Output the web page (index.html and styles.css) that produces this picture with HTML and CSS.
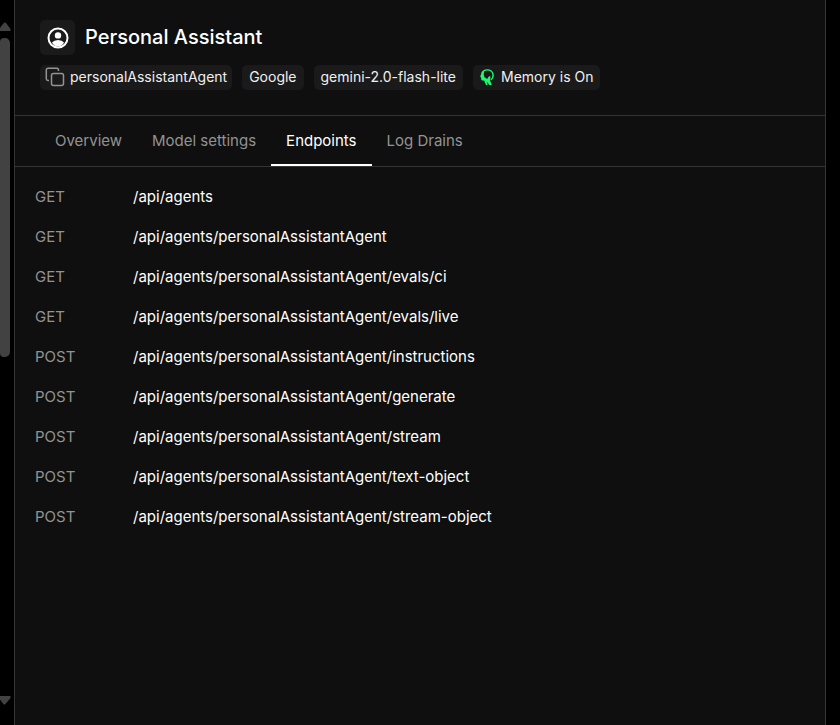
FILE: index.html
```html
<!DOCTYPE html>
<html lang="en">
<head>
<meta charset="utf-8">
<title>Personal Assistant</title>
<link rel="stylesheet" href="styles.css">
</head>
<body>
<div class="app">
  <div class="scrollbar" aria-hidden="true">
    <svg class="arrow" viewBox="0 0 12 9"><path d="M-1 9v-2L4 .8Q5 0 6 1L10.500 7v2z"/></svg>
    <div class="track"><div class="thumb"></div></div>
    <svg class="arrow" viewBox="0 0 12 9"><path d="M-1 0v2L3.500 8.200Q4.500 9 5.500 8L10.500 2V0z"/></svg>
  </div>
  <main class="panel">
    <header class="header">
      <div class="heading">
        <span class="avatar">
          <svg viewBox="0 0 22 22" width="22" height="22"><circle cx="11" cy="11" r="9.500" fill="none" stroke="#fff" stroke-width="2"/><circle cx="11" cy="8.400" r="3.200" fill="#fff"/><path d="M5 15.500Q7 13 11 13T17 15.500Q15 19.500 11 19.500T5 15.500z" fill="#fff"/></svg>
        </span>
        <h1>Personal Assistant</h1>
      </div>
      <div class="badges">
        <button class="badge copy" type="button">
          <svg viewBox="0 0 20 20" width="20" height="20" fill="none" stroke="#939393" stroke-width="1.500"><rect x="6.500" y="6.500" width="12" height="12" rx="2"/><path d="M4 13.500H3a1.700 1.700 0 0 1-1.700-1.700V3A1.700 1.700 0 0 1 3 1.300h8.800A1.700 1.700 0 0 1 13.500 3v1"/></svg>
          personalAssistantAgent
        </button>
        <span class="badge">Google</span>
        <span class="badge">gemini-2.0-flash-lite</span>
        <span class="badge memory">
          <svg viewBox="0 0 14 16" width="14" height="16" fill="#1bfb6f"><path d="M2 4.500C3.500-.2 11-.4 12.700 4.200 13.800 7.400 12.600 9.600 10.800 10.800" fill="none" stroke="#1bfb6f" stroke-width="1.400"/><path d="M3.400 1.800Q1.300 3 1 5.500L.2 7.600 1 8.400 1.300 10.800q.2.700 1 .7h1.800L6 16h1.600L6.700 12.600 9.300 16h2.500L10 11.200 10.500 7.400 9 7.200 7.200 10 4.300 8Q3 5 4.200 2.800z"/></svg>
          Memory is On
        </span>
      </div>
    </header>
    <nav class="tabs">
      <a class="tab" href="#overview">Overview</a>
      <a class="tab" href="#model">Model settings</a>
      <a class="tab active" href="#endpoints" aria-current="page">Endpoints</a>
      <a class="tab" href="#logs">Log Drains</a>
    </nav>
    <table class="endpoints">
      <tbody>
        <tr><th scope="row">GET</th><td>/api/agents</td></tr>
        <tr><th scope="row">GET</th><td>/api/agents/personalAssistantAgent</td></tr>
        <tr><th scope="row">GET</th><td>/api/agents/personalAssistantAgent/evals/ci</td></tr>
        <tr><th scope="row">GET</th><td>/api/agents/personalAssistantAgent/evals/live</td></tr>
        <tr><th scope="row">POST</th><td>/api/agents/personalAssistantAgent/instructions</td></tr>
        <tr><th scope="row">POST</th><td>/api/agents/personalAssistantAgent/generate</td></tr>
        <tr><th scope="row">POST</th><td>/api/agents/personalAssistantAgent/stream</td></tr>
        <tr><th scope="row">POST</th><td>/api/agents/personalAssistantAgent/text-object</td></tr>
        <tr><th scope="row">POST</th><td>/api/agents/personalAssistantAgent/stream-object</td></tr>
      </tbody>
    </table>
  </main>
</div>
</body>
</html>
```
FILE: styles.css
```css
* { box-sizing: border-box; }
body {
  margin: 0;
  background: #000;
  color: #fff;
  font-family: Inter, "Liberation Sans", sans-serif;
  font-size: 15px;
  line-height: 20px;
}
.app {
  display: flex;
  min-height: 100vh;
  padding-right: 14px;
}
.scrollbar {
  display: flex;
  flex-direction: column;
  flex: 0 0 14px;
  padding: 22px 0 20px;
}
.arrow {
  width: 12px;
  height: 9px;
  fill: #424242;
}
.track {
  flex: 1;
  padding-top: 7px;
}
.thumb {
  width: 10px;
  height: 48.5%;
  background: #424242;
  border-radius: 4px 5px 5px 4px;
}
.panel {
  flex: 1;
  min-width: 0;
  background: #0f0f0f;
  border: solid #343434;
  border-width: 0 1px;
}
.header {
  padding: 20px 25px 25px;
  border-bottom: 1px solid #343434;
}
.heading {
  display: flex;
  gap: 10px;
  margin-bottom: 10px;
}
.avatar {
  display: grid;
  place-items: center;
  width: 35px;
  height: 35px;
  background: #1a1a1a;
  border-radius: 5px;
}
h1 {
  margin: 0;
  font-size: 20px;
  line-height: 34px;
  font-weight: 500;
}
.badges {
  display: flex;
  flex-wrap: wrap;
  gap: 10px;
}
.badge {
  display: flex;
  align-items: center;
  height: 25px;
  padding: 0 7px 1px;
  border: 0;
  border-radius: 5px;
  background: #1a1a1a;
  color: #f0f0f0;
  font: 400 14px/20px Inter, "Liberation Sans", sans-serif;
}
.copy {
  gap: 5px;
  padding-left: 5px;
  padding-right: 5px;
}
.memory { gap: 7px; }
.tabs {
  display: flex;
  padding: 0 25px;
  border-bottom: 1px solid #343434;
}
.tab {
  padding: 15px 15px 13px;
  border-bottom: 2px solid transparent;
  color: #939393;
  text-decoration: none;
}
.tab.active {
  color: #fff;
  border-color: #fff;
}
.endpoints {
  width: 100%;
  margin-top: 10px;
  border-collapse: collapse;
  table-layout: fixed;
}
.endpoints th,
.endpoints td {
  height: 40px;
  padding: 0;
  text-align: left;
  font-weight: 400;
}
.endpoints th {
  width: 118px;
  padding-left: 20px;
  color: #939393;
}
```
